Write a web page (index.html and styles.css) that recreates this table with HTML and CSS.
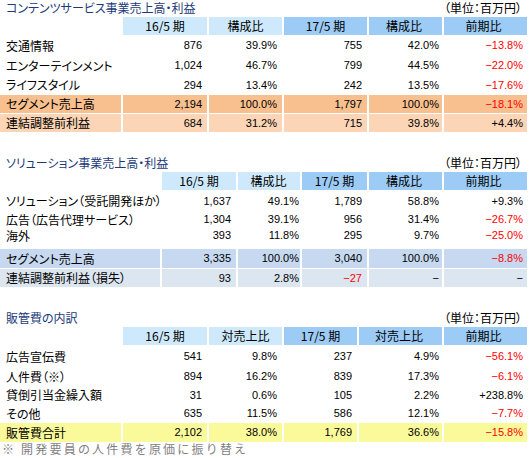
FILE: index.html
```html
<!DOCTYPE html>
<html lang="ja">
<head>
<meta charset="utf-8">
<title>業績</title>
<link rel="stylesheet" href="styles.css">
</head>
<body>
<section class="sec sec1">
  <div class="title-row"><h2 class="title">コンテンツサービス事業売上高・利益</h2><span class="unit">（単位：百万円）</span></div>
  <div class="grid g1">
    <div class="row head"><div></div><div class="hp">16/5 期</div><div class="hp">構成比</div><div class="hd">17/5 期</div><div class="hd">構成比</div><div class="hd">前期比</div></div>
    <div class="row"><div class="lbl">交通情報</div><div>876</div><div>39.9%</div><div>755</div><div>42.0%</div><div class="red">−13.8%</div></div>
    <div class="row"><div class="lbl">エンターテインメント</div><div>1,024</div><div>46.7%</div><div>799</div><div>44.5%</div><div class="red">−22.0%</div></div>
    <div class="row"><div class="lbl">ライフスタイル</div><div>294</div><div>13.4%</div><div>242</div><div>13.5%</div><div class="red">−17.6%</div></div>
    <div class="row orange"><div class="lbl">セグメント売上高</div><div>2,194</div><div>100.0%</div><div>1,797</div><div>100.0%</div><div class="red">−18.1%</div></div>
    <div class="row peach"><div class="lbl">連結調整前利益</div><div>684</div><div>31.2%</div><div>715</div><div>39.8%</div><div>+4.4%</div></div>
  </div>
</section>

<section class="sec sec2">
  <div class="title-row"><h2 class="title">ソリューション事業売上高・利益</h2><span class="unit">（単位：百万円）</span></div>
  <div class="grid g2">
    <div class="row head"><div></div><div class="hp">16/5 期</div><div class="hp">構成比</div><div class="hd">17/5 期</div><div class="hd">構成比</div><div class="hd">前期比</div></div>
    <div class="row"><div class="lbl">ソリューション（受託開発ほか）</div><div>1,637</div><div>49.1%</div><div>1,789</div><div>58.8%</div><div>+9.3%</div></div>
    <div class="row"><div class="lbl">広告（広告代理サービス）</div><div>1,304</div><div>39.1%</div><div>956</div><div>31.4%</div><div class="red">−26.7%</div></div>
    <div class="row low"><div class="lbl">海外</div><div>393</div><div>11.8%</div><div>295</div><div>9.7%</div><div class="red">−25.0%</div></div>
    <div class="row blue"><div class="lbl">セグメント売上高</div><div>3,335</div><div>100.0%</div><div>3,040</div><div>100.0%</div><div class="red">−8.8%</div></div>
    <div class="row paleblue"><div class="lbl">連結調整前利益（損失）</div><div>93</div><div>2.8%</div><div class="red">−27</div><div>−</div><div>−</div></div>
  </div>
</section>

<section class="sec sec3">
  <div class="title-row"><h2 class="title">販管費の内訳</h2><span class="unit">（単位：百万円）</span></div>
  <div class="grid g3">
    <div class="row head"><div></div><div class="hp">16/5 期</div><div class="hp">対売上比</div><div class="hd">17/5 期</div><div class="hd">対売上比</div><div class="hd">前期比</div></div>
    <div class="row"><div class="lbl">広告宣伝費</div><div>541</div><div>9.8%</div><div>237</div><div>4.9%</div><div class="red">−56.1%</div></div>
    <div class="row"><div class="lbl">人件費（※）</div><div>894</div><div>16.2%</div><div>839</div><div>17.3%</div><div class="red">−6.1%</div></div>
    <div class="row"><div class="lbl">貸倒引当金繰入額</div><div>31</div><div>0.6%</div><div>105</div><div>2.2%</div><div>+238.8%</div></div>
    <div class="row"><div class="lbl">その他</div><div>635</div><div>11.5%</div><div>586</div><div>12.1%</div><div class="red">−7.7%</div></div>
    <div class="row yellow"><div class="lbl">販管費合計</div><div>2,102</div><div>38.0%</div><div>1,769</div><div>36.6%</div><div class="red">−15.8%</div></div>
  </div>
  <p class="note">※ 開発要員の人件費を原価に振り替え</p>
</section>
</body>
</html>
```

FILE: styles.css
```css
html, body {
  margin: 0;
  padding: 0;
  background: #ffffff;
}
body {
  width: 529px;
  font-family: "Noto Sans CJK JP", "Noto Sans", sans-serif;
  font-size: 12px;
  color: #000;
  font-feature-settings: "palt";
}
.sec {
  display: flex;
  flex-direction: column;
}
.sec2, .sec3 {
  margin-top: 23px;
}
.title-row {
  height: 17px;
  display: flex;
  align-items: flex-start;
  justify-content: space-between;
  padding: 0 6px 0 6px;
  width: 516px;
}
.title {
  margin: 0;
  font-size: 12px;
  font-weight: normal;
  color: #1c3a78;
  line-height: 16px;
}
.unit {
  font-size: 12px;
  line-height: 16px;
  color: #000;
}
.grid {
  display: grid;
  column-gap: 2px;
  row-gap: 1px;
  width: 527px;
}
.g1 {
  grid-template-columns: 121px 84px 73px 83px 73px 83px;
  grid-template-rows: 18px 19px 19px 18px 18px 18px;
}
.g2 {
  grid-template-columns: 160px 74px 62px 65px 73px 83px;
  grid-template-rows: 18px 20px 15px 20px 19px 18px;
}
.g3 {
  grid-template-columns: 121px 84px 73px 73px 83px 83px;
  grid-template-rows: 18px 21px 17px 18px 17px 19px;
}
.row {
  display: contents;
}
.row > div {
  display: flex;
  align-items: center;
  justify-content: flex-end;
  padding-right: 5px;
  line-height: 1;
  font-family: "Liberation Sans", "Noto Sans", sans-serif;
  font-size: 11px;
  white-space: nowrap;
  min-width: 0;
}
.row > div:nth-child(5) {
  padding-right: 3px;
}
.row > div:nth-child(6) {
  padding-right: 4px;
}
.g2 .row > div:nth-child(3) {
  padding-right: 1px;
}
.row > .lbl {
  justify-content: flex-start;
  padding-left: 6px;
  padding-right: 0;
  font-family: "Noto Sans CJK JP", "Noto Sans", sans-serif;
  font-size: 12px;
}
.head > div {
  justify-content: center;
  padding: 0;
  font-family: "Noto Sans CJK JP", "Noto Sans", sans-serif;
  font-size: 12px;
}
.head > .hp {
  padding-right: 0;
  background: #cde9fb;
}
.head > .hd {
  padding-right: 0;
  background: #9ccbf6;
}
.low > div {
  padding-bottom: 5px;
}
.red {
  color: #ff0000;
}
.orange > div {
  background: #f8bf8f;
}
.peach > div {
  background: #fbd5b5;
}
.blue > div {
  background: #c6d9f0;
}
.paleblue > div {
  background: #dce6f1;
}
.yellow > div {
  background: #fbfa9b;
}
.note {
  margin: 1px 0 0 0;
  padding-left: 2px;
  height: 12px;
  line-height: 12px;
  font-size: 12px;
  letter-spacing: 2.2px;
  font-feature-settings: normal;
  color: #7f7f7f;
  white-space: nowrap;
}
```
